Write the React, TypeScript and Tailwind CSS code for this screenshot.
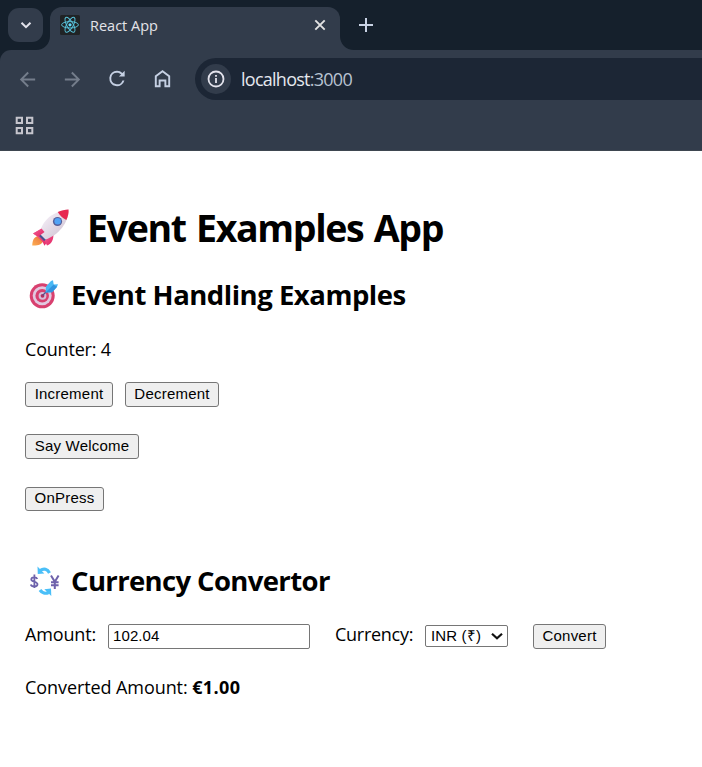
import React, { useState } from "react";

const uiFont = "font-['Open_Sans','Noto_Sans',sans-serif]";
const controlFont = "font-['Liberation_Sans',Arial,sans-serif]";

function ReactLogo() {
  return (
    <svg className="h-5 w-5" viewBox="0 0 20 20" fill="none" stroke="#58c4dc" strokeWidth="0.95">
      <rect width="20" height="20" rx="1.5" fill="#202325" stroke="none" />
      <ellipse cx="10" cy="9.8" rx="8.4" ry="3.2" />
      <ellipse cx="10" cy="9.8" rx="8.4" ry="3.2" transform="rotate(60 10 9.8)" />
      <ellipse cx="10" cy="9.8" rx="8.4" ry="3.2" transform="rotate(120 10 9.8)" />
      <circle cx="10" cy="9.8" r="1.6" fill="#61dafb" stroke="none" />
    </svg>
  );
}

function Rocket() {
  return (
    <svg className="h-[52px] w-[52px] shrink-0" viewBox="0 0 52 52">
      <defs>
        <linearGradient id="hull" x1="0" y1="0" x2="1" y2="1">
          <stop offset="0.2" stopColor="#f3ecf5" />
          <stop offset="1" stopColor="#c9bccd" />
        </linearGradient>
        <linearGradient id="fin" x1="0" y1="0" x2="1" y2="1">
          <stop offset="0" stopColor="#f0609a" />
          <stop offset="1" stopColor="#e3235f" />
        </linearGradient>
        <linearGradient id="flame" x1="1" y1="0" x2="0" y2="1">
          <stop offset="0" stopColor="#e8703c" />
          <stop offset="1" stopColor="#fdae52" />
        </linearGradient>
      </defs>
      <path d="M14 34c-4 1-5.500 4-5.800 9.500 5.500.3 10-1 11.300-5z" fill="url(#flame)" />
      <path d="M18.500 26.500 9 31.500l4.500 3.200 5 5 2 4.100 6.500-9.600z" fill="url(#fin)" />
      <path d="m27.500 33-7 5.500 2.500 5c5-2 6.500-6 6.500-12z" fill="url(#fin)" />
      <path d="m14.500 33.500 5.500 5.500 2-1.500-6-6z" fill="#42518f" />
      <path d="M15.500 31.500C17.500 21.500 25 10 44.500 7.500 45 20.500 34 33.500 21.500 37.500z" fill="url(#hull)" />
      <path d="M33.800 10c3.200-1.300 7.500-2.300 10.700-2.500.4 3.500-.5 7.300-2.200 10.500-3.500-1.500-6.500-4.500-8.500-8z" fill="#e72751" />
      <path d="m17.500 26.500-8.500 5 5.500 3 6-4.500z" fill="url(#fin)" />
      <circle cx="33.500" cy="19.500" r="4.600" fill="#555e99" />
      <circle cx="33.700" cy="19.300" r="3.300" fill="#50a2f5" />
    </svg>
  );
}

function Target() {
  return (
    <svg className="h-10 w-10 shrink-0" viewBox="0 0 40 40">
      <circle cx="18.200" cy="20.800" r="12.500" fill="#d8406f" />
      <circle cx="18.200" cy="20.800" r="9.500" fill="#e2c8e0" />
      <circle cx="18.200" cy="20.800" r="6.800" fill="#d8406f" />
      <circle cx="18.500" cy="20.800" r="3.900" fill="#d5bdd8" />
      <circle cx="18.500" cy="20.800" r="1.900" fill="#b72c5d" />
      <path d="m18.500 20.500 6-6" stroke="#54528d" strokeWidth="1.300" />
      <path d="M21.500 17.500 22 11.500l5-5.500 2-.8.700 4.300 4.300-.3-1 2.600-5 5.500z" fill="#48b8f4" />
      <path d="m21.500 17.500 8.200-8 1.500 1.500 2 .8-5 5.500z" fill="#3194df" />
    </svg>
  );
}

function Exchange() {
  return (
    <svg className="h-10 w-10 shrink-0" viewBox="0 0 40 40" fill="none">
      <path d="M16 9.500c4-2.500 7.500-1.500 9.500 2.500" stroke="#4abff8" strokeWidth="3.200" />
      <path d="m13.500 5.500.3 7.500 6.500-.5z" fill="#4abff8" />
      <path d="M24.500 31.500c-3 1.500-6.500.5-8.500-2.500" stroke="#4abff8" strokeWidth="3.200" />
      <path d="m27.300 35-.3-7.500-6.700.8z" fill="#4abff8" />
      <path d="M13.300 18c-.8-2.200-6-2.200-6 .5 0 2.800 6.200 1.700 6.200 4.700 0 3-6 2.800-6.700.2M10.400 13.500v13.500" stroke="#6e62ab" strokeWidth="1.800" />
      <path d="m27 14.500 3.800 6.300 3.800-6.300M30.800 20v8M27 21.300h7.600M27 24.300h7.600" stroke="#6e62ab" strokeWidth="2" />
    </svg>
  );
}

function BrowserHeader() {
  return (
    <header className="h-[151px] border-b border-[#3e4650] bg-[#323c4b]">
      <div className="relative flex h-[50px] items-start bg-[#15202c]">
        <button aria-label="Search tabs" className="ml-2 mt-2 flex h-[34px] w-[35px] items-center justify-center rounded-[11px] bg-[#323c4b]">
          <svg className="h-3 w-3" viewBox="0 0 12 12" fill="none" stroke="#e3e3ec" strokeWidth="2">
            <path d="m1.500 3.700 4.500 4.500 4.500-4.500" />
          </svg>
        </button>
        <div className="relative ml-[7px] mt-[7px] flex h-[43px] w-[290px] rounded-t-[12px] bg-[#323c4b] pl-[10px] pt-2">
          <ReactLogo />
          <span className={`${uiFont} ml-[10px] h-5 w-[210px] whitespace-nowrap text-[14.500px] leading-[21px] text-[#e3e3e8]`}>React App</span>
          <svg className="ml-[14px] mt-[4px] h-3 w-3 shrink-0" viewBox="0 0 12 12" stroke="#e3e3e3" strokeWidth="1.900">
            <path d="m1.300 1.300 9.400 9.400m0-9.400-9.400 9.400" />
          </svg>
          <svg className="absolute -left-[14px] bottom-0 h-[14px] w-[14px]" viewBox="0 0 14 14" fill="#323c4b">
            <path d="M14 0v14H0C8 14 14 8 14 0z" />
          </svg>
          <svg className="absolute -right-[14px] bottom-0 h-[14px] w-[14px]" viewBox="0 0 14 14" fill="#323c4b">
            <path d="M0 0v14h14C6 14 0 8 0 0z" />
          </svg>
        </div>
        <svg className="ml-[19px] mt-[18px] h-[14px] w-[14px]" viewBox="0 0 14 14" stroke="#c8d2e4" strokeWidth="2">
          <path d="M7 0v14M0 7h14" />
        </svg>
      </div>
      <div className="bg-[#15202c]">
        <div className="flex h-[58px] items-center rounded-tl-[11px] bg-[#323c4b] pl-4">
          <svg className="h-[23px] w-[23px]" viewBox="0 0 24 24" fill="#747d8b">
            <path d="M20 11H7.830l5.590-5.590L12 4l-8 8 8 8 1.410-1.410L7.830 13H20z" />
          </svg>
          <svg className="ml-[22px] h-[23px] w-[23px]" viewBox="0 0 24 24" fill="#747d8b">
            <path d="m12 4-1.410 1.410L16.170 11H4v2h12.170l-5.580 5.590L12 20l8-8z" />
          </svg>
          <svg className="-mt-px ml-[21px] h-[23px] w-[24px]" viewBox="0 0 24 24" fill="#c5d0e3">
            <path d="M17.650 6.350A7.960 7.960 0 0 0 12 4a8 8 0 1 0 7.730 10h-2.080A6 6 0 1 1 12 6c1.660 0 3.140.690 4.220 1.780L14 10h6V4z" />
          </svg>
          <svg className="-mt-px ml-[22px] h-[23px] w-[23px]" viewBox="0 0 24 24" fill="none" stroke="#c5d0e3" strokeWidth="2">
            <path d="M5 20V9.700l7-5.400 7 5.400V20h-4v-6H9v6z" />
          </svg>
          <div className="ml-[21px] flex h-[42px] flex-1 items-center rounded-l-[21px] bg-[#1c2635] pl-[6px]">
            <div className="flex h-[30px] w-[30px] items-center justify-center rounded-full bg-[#323c4b]">
              <svg className="h-[18px] w-[18px]" viewBox="0 0 18 18" fill="none" stroke="#e3e3ec" strokeWidth="1.800">
                <circle cx="9" cy="9" r="7.500" />
                <path d="M9 8v5M9 5v1.800" />
              </svg>
            </div>
            <span className={`${uiFont} ml-[10px] mt-px whitespace-nowrap text-[18px] tracking-[-0.740px] text-[#e5e8ee]`}>
              localhost<span className="text-[#b8c2d1]">:3000</span>
            </span>
          </div>
        </div>
      </div>
      <svg className="ml-[15px] mt-2 h-[19px] w-[19px]" viewBox="0 0 19 19" fill="none" stroke="#c6c5cd" strokeWidth="2">
        <path d="M1.700 1.700h5.300v5.300H1.700zM12 1.700h5.300v5.300H12zM1.700 12h5.300v5.300H1.700zM12 12h5.300v5.300H12z" />
      </svg>
    </header>
  );
}

function ActionButton({ children, className = "", onClick }: { children: React.ReactNode; className?: string; onClick?: () => void }) {
  return (
    <button onClick={onClick} className={`${controlFont} shrink-0 whitespace-nowrap rounded-[3px] border border-[#767676] bg-[#efefef] pb-[2px] text-center text-[15px] leading-[20px] tracking-[0.220px] text-black ${className}`}>
      {children}
    </button>
  );
}

export default function App() {
  const [count, setCount] = useState(4);
  const [amount, setAmount] = useState("102.04");
  return (
    <div className="min-h-[767px] overflow-hidden bg-white text-black">
      <BrowserHeader />
      <main className={`${uiFont} pl-[25px] text-[18px]`}>
        <h1 className="mt-[52px] flex h-[50px] items-center whitespace-nowrap text-[37.500px] font-bold leading-[50px]">
          <span className="-ml-px mr-[11px]"><Rocket /></span>
          <span className="tracking-[-1.350px] [word-spacing:2px]">Event Examples App</span>
        </h1>
        <h2 className="mt-[23px] flex h-[38px] items-center whitespace-nowrap text-[27.500px] font-bold leading-[38px]">
          <span className="-ml-px mr-[7px]"><Target /></span>
          <span className="tracking-[-0.480px]">Event Handling Examples</span>
        </h2>
        <p className="mt-[22px] h-[26px] leading-[26px] tracking-[-0.200px]">Counter: {count}</p>
        <div className="mt-5 flex gap-3">
          <ActionButton className="h-[25px] w-[88px]" onClick={() => setCount(count + 1)}>Increment</ActionButton>
          <ActionButton className="h-[25px] w-[94px]" onClick={() => setCount(count - 1)}>Decrement</ActionButton>
        </div>
        <div className="mt-[27px] flex"><ActionButton className="h-[25px] w-[114px]">Say Welcome</ActionButton></div>
        <div className="mt-[28px] flex"><ActionButton className="h-6 w-[79px]">OnPress</ActionButton></div>
        <h2 className="mt-[51px] flex h-[38px] items-center whitespace-nowrap text-[27.500px] font-bold leading-[38px]">
          <span className="-ml-px mr-[7px]"><Exchange /></span>
          <span className="tracking-[-0.640px]">Currency Convertor</span>
        </h2>
        <form className="mt-[21px] flex h-7 items-start" onSubmit={(e) => e.preventDefault()}>
          <label htmlFor="amount" className="w-[83px] whitespace-nowrap leading-[26px] tracking-[-0.150px]">Amount:</label>
          <input id="amount" value={amount} onChange={(e) => setAmount(e.target.value)} className={`${controlFont} mt-[3px] h-[25px] w-[202px] rounded-[2px] border border-[#767676] pb-[2px] pl-[4px] text-[15px] tracking-[0.100px]`} />
          <label htmlFor="currency" className="ml-[25px] w-[90px] whitespace-nowrap leading-[26px] tracking-[-0.280px]">Currency:</label>
          <button id="currency" type="button" className={`${controlFont} mt-1 flex h-[22px] w-[83px] items-center justify-between whitespace-nowrap rounded-[2px] border border-[#767676] bg-white pl-[5px] pr-[4px] text-[15px] leading-5 tracking-[0.150px]`}>
            INR (₹)
            <svg className="h-3 w-3" viewBox="0 0 12 12" fill="none" stroke="#111" strokeWidth="2.200">
              <path d="m1 3.700 5 4.600 5-4.600" />
            </svg>
          </button>
          <ActionButton className="ml-[25px] mt-[3px] h-[25px] w-[73px]">Convert</ActionButton>
        </form>
        <p className="mt-[25px] h-[26px] whitespace-nowrap leading-[26px] tracking-[-0.080px]">
          Converted Amount: <b className="tracking-[0.350px]">€1.00</b>
        </p>
      </main>
    </div>
  );
}
